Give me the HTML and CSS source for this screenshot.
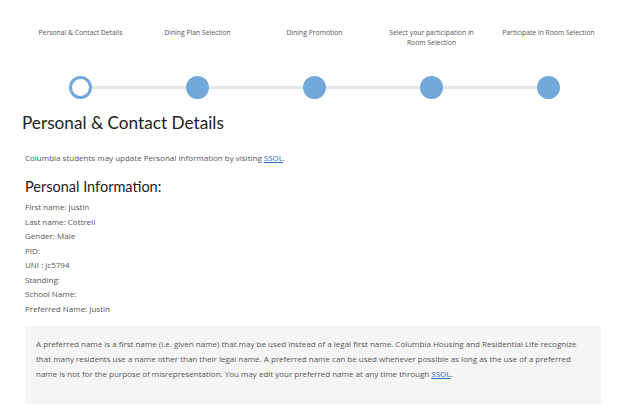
FILE: index.html
```html
<!DOCTYPE html>
<html>
<head>
<meta charset="utf-8">
<link rel="stylesheet" href="styles.css">
</head>
<body>
<div class="wizard">
  <div class="labels">
    <div class="label">Personal &amp; Contact Details</div>
    <div class="label">Dining Plan Selection</div>
    <div class="label">Dining Promotion</div>
    <div class="label">Select your participation in Room Selection</div>
    <div class="label">Participate in Room Selection</div>
  </div>
  <div class="track">
    <span class="dot current"></span><span class="bar"></span>
    <span class="dot"></span><span class="bar"></span>
    <span class="dot"></span><span class="bar"></span>
    <span class="dot"></span><span class="bar"></span>
    <span class="dot"></span>
  </div>
</div>
<main class="content">
  <h1 class="title">Personal &amp; Contact Details</h1>
  <p class="note">Columbia students may update Personal Information by visiting <a href="#">SSOL</a>.</p>
  <h2 class="subtitle">Personal Information:</h2>
  <ul class="info">
    <li>First name: Justin</li>
    <li>Last name: Cottrell</li>
    <li>Gender: Male</li>
    <li>PID:</li>
    <li>UNI : jc5794</li>
    <li>Standing:</li>
    <li>School Name:</li>
    <li>Preferred Name: Justin</li>
  </ul>
  <div class="box">
    <p>A preferred name is a first name (i.e. given name) that may be used instead of a legal first name. Columbia Housing and Residential Life recognize that many residents use a name other than their legal name. A preferred name can be used whenever possible as long as the use of a preferred name is not for the purpose of misrepresentation. You may edit your preferred name at any time through <a href="#">SSOL</a>.</p>
  </div>
</main>
</body>
</html>
```
FILE: styles.css
```css
html, body {
  margin: 0;
  padding: 0;
  background: #fff;
}
body {
  font-family: "Open Sans", "DejaVu Sans", sans-serif;
  color: #555;
  width: 624px;
  height: 405px;
  overflow: hidden;
}
.wizard {
  padding-top: 28px;
  padding-left: 22px;
}
.labels {
  display: grid;
  grid-template-columns: repeat(5, 117px);
  height: 47px;
}
.label {
  font-size: 6.8px;
  line-height: 9.5px;
  color: #555;
  text-align: center;
  width: 96px;
  justify-self: center;
}
.track {
  display: flex;
  align-items: center;
  padding-left: 47px;
  height: 24px;
}
.dot {
  width: 23px;
  height: 23px;
  box-sizing: border-box;
  border-radius: 50%;
  background: #72a8da;
  flex: none;
}
.dot.current {
  background: #fff;
  border: 3px solid #72a8da;
}
.bar {
  width: 94px;
  height: 3px;
  background: #e6e6e6;
  flex: none;
}
.content {
  padding: 0 23px 0 22px;
}
.title {
  font-family: "Lato", "Open Sans", sans-serif;
  font-size: 17.2px;
  font-weight: 400;
  color: #222;
  margin: 12px 0 0 0;
  line-height: 24px;
}
.note {
  font-size: 8px;
  margin: 17px 0 0 3px;
  line-height: 12px;
}
a {
  color: #2a6ebb;
  text-decoration: underline;
}
.subtitle {
  font-family: "Lato", "Open Sans", sans-serif;
  font-size: 14.5px;
  font-weight: 400;
  color: #222;
  margin: 13px 0 0 3px;
  line-height: 20px;
}
.info {
  list-style: none;
  margin: 3px 0 0 3px;
  padding: 0;
  font-size: 8px;
  line-height: 14.57px;
}
.box {
  margin: 9px 0 0 3px;
  background: #f5f5f5;
  padding: 10px 12px 20px 11px;
  height: 48px;
}
.box p {
  margin: 0;
  font-size: 8px;
  line-height: 15px;
}
```
